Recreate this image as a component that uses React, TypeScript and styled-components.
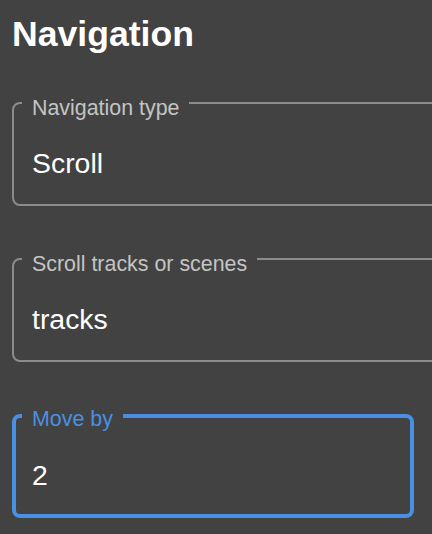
import React from "react";
import styled, { createGlobalStyle } from "styled-components";

const Global = createGlobalStyle`
  html, body {
    margin: 0;
    padding: 0;
    background: #424242;
    overflow: hidden;
  }
  body {
    font-family: "Liberation Sans", Arial, Helvetica, sans-serif;
  }
`;

const Page = styled.div`
  display: flex;
  flex-direction: column;
  align-items: flex-start;
  gap: 52px;
  padding: 0 18px 0 12px;
  width: 432px;
  height: 534px;
  box-sizing: border-box;
  overflow: hidden;
`;

const Heading = styled.h1`
  margin: 0 0 -4px 0;
  padding-top: 14px;
  font-size: 35.6px;
  line-height: 40px;
  font-weight: 700;
  color: #ffffff;
`;

const Field = styled.div<{ $focused?: boolean; $wide?: boolean }>`
  position: relative;
  box-sizing: border-box;
  flex: none;
  width: ${(p) => (p.$wide ? "460px" : "402px")};
  height: 104px;
  border: ${(p) => (p.$focused ? "4px solid #4a90e2" : "2px solid #8c8c8c")};
  border-radius: 8px;
  padding: ${(p) =>
    p.$focused ? "41px 16px 23px 16px" : "43px 18px 25px 18px"};
`;

const Label = styled.span<{ $focused?: boolean }>`
  position: absolute;
  top: ${(p) => (p.$focused ? "-11px" : "-8px")};
  left: ${(p) => (p.$focused ? "6px" : "8px")};
  padding: 0 10px;
  background: #424242;
  font-size: 21.4px;
  line-height: 24px;
  white-space: nowrap;
  color: ${(p) => (p.$focused ? "#4a90e2" : "#c4c4c4")};
`;

const Value = styled.div`
  font-size: 28.4px;
  line-height: 32px;
  color: #ffffff;
  white-space: nowrap;
`;

type FieldProps = {
  label: string;
  value: string;
  focused?: boolean;
  wide?: boolean;
};

function TextField({ label, value, focused, wide }: FieldProps) {
  return (
    <Field $focused={focused} $wide={wide}>
      <Label $focused={focused}>{label}</Label>
      <Value>{value}</Value>
    </Field>
  );
}

export default function App() {
  return (
    <>
      <Global />
      <Page>
        <Heading>Navigation</Heading>
        <TextField label="Navigation type" value="Scroll" wide />
        <TextField label="Scroll tracks or scenes" value="tracks" wide />
        <TextField label="Move by" value="2" focused />
      </Page>
    </>
  );
}
